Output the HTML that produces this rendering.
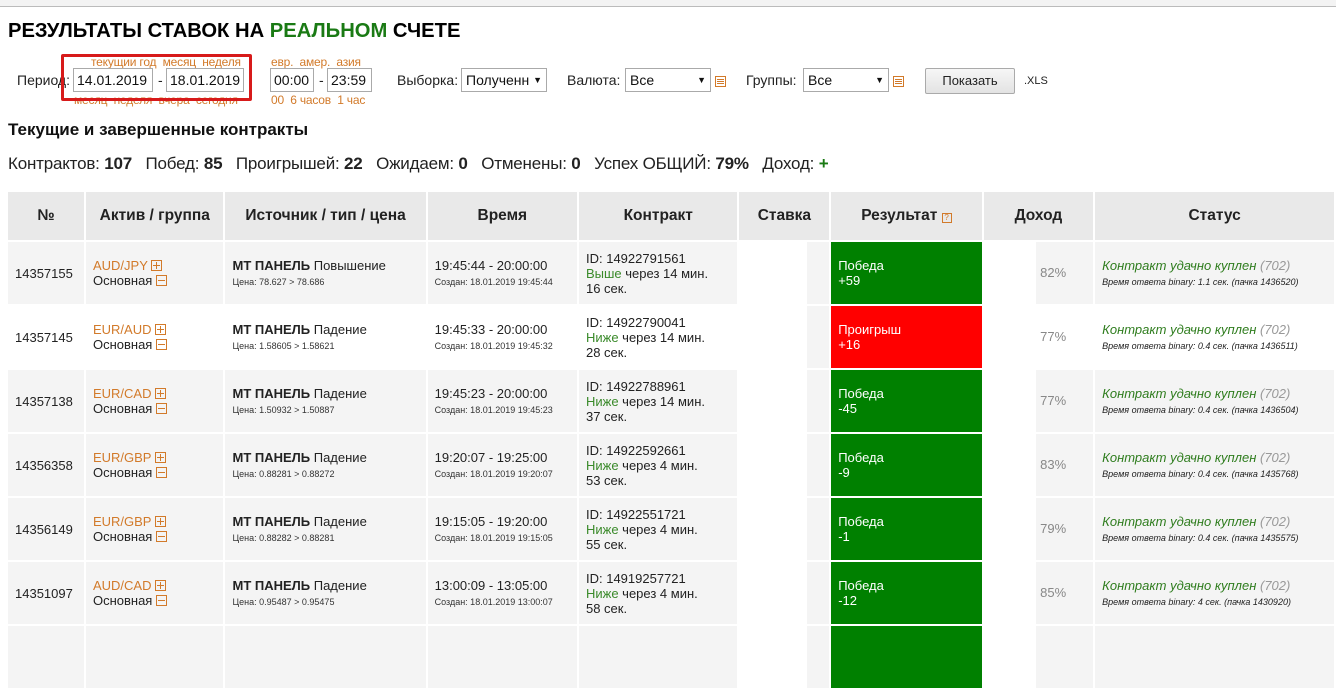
<!DOCTYPE html>
<html><head><meta charset="utf-8"><style>
*{box-sizing:border-box;margin:0;padding:0}
body{width:1336px;height:629px;overflow:hidden;background:#fff;font-family:"Liberation Sans",sans-serif;color:#222;position:relative}
.a{position:absolute;white-space:nowrap}
.topbar{position:absolute;left:0;top:0;width:1336px;height:7px;background:#f3f3f3;border-bottom:1px solid #bbb}
h1{position:absolute;left:8px;top:20px;font-size:20.2px;font-weight:bold;color:#000}
.or{color:#d27a2a;font-size:12px;letter-spacing:-0.2px}
.inp{position:absolute;height:24px;border:1px solid #aaa;background:#fff;font-size:14px;padding:3px 3px;color:#111}
.sel{position:absolute;height:24px;border:1px solid #aaa;background:#fff;font-size:14px;padding:3px 4px;color:#111}
.sel:after{content:"▼";position:absolute;right:4px;top:6px;font-size:9px}
.ic{display:inline-block;width:11px;height:11px;border:1px solid #d27a2a;position:relative;vertical-align:-1px}
.ic.m:before{content:"";position:absolute;left:1px;right:1px;top:4px;height:1px;background:#d27a2a}
.ic.e:before{content:"";position:absolute;left:1px;right:1px;top:2px;height:1px;background:#d27a2a;box-shadow:0 2px 0 #d27a2a,0 4px 0 #d27a2a}
.ic.p:before{content:"";position:absolute;left:1px;right:1px;top:4px;height:1px;background:#d27a2a}
.ic.p:after{content:"";position:absolute;top:1px;bottom:1px;left:4px;width:1px;background:#d27a2a}
.lbl{font-size:14px;color:#222}
table{position:absolute;left:6px;top:190px;border-collapse:separate;border-spacing:2px;table-layout:fixed}
th{background:#e9e9e9;height:48px;font-size:15.5px;font-weight:bold;color:#222}
td{height:62px;font-size:13px;color:#222;vertical-align:middle;padding:0 7px;background:#f4f4f4}
tr.w td{background:#fff}
.sm{font-size:9px;color:#333}
.g{color:#3a8a2a}
.res{color:#fff;font-size:13px;padding-left:7px}
.win{background:#008000!important}
.los{background:#ff0000!important}
td.st{padding:0;position:relative;background:#fff!important}
td.st div{position:absolute;right:0;top:0;bottom:0;width:22px;background:#f4f4f4}
td.dh{padding:0;position:relative;background:#fff!important}
td.dh div{position:absolute;right:0;top:0;bottom:0;width:57px;background:#f4f4f4;color:#888;font-size:13px;line-height:62px;padding-left:4px}
.stt{font-style:italic;color:#2f7d1e;font-size:13px}
.stt span{color:#999}
.stt .sm{color:#222;font-size:9px}
</style></head><body>
<div class="topbar"></div>
<h1>РЕЗУЛЬТАТЫ СТАВОК НА <span style="color:#1a7a14">РЕАЛЬНОМ</span> СЧЕТЕ</h1>

<div class="a or" style="left:91px;top:55px">текущии год&nbsp; месяц&nbsp; неделя</div>
<div class="a lbl" style="left:17px;top:72px">Период:</div>
<div class="inp" style="left:73px;top:68px;width:80px">14.01.2019</div>
<div class="a lbl" style="left:158px;top:72px">-</div>
<div class="inp" style="left:166px;top:68px;width:78px">18.01.2019</div>
<div class="a or" style="left:74px;top:93px">месяц&nbsp; неделя&nbsp; вчера&nbsp; сегодня</div>
<div class="a" style="left:61px;top:54px;width:191px;height:47px;border:3px solid #d71a1a;border-radius:2px"></div>

<div class="a or" style="left:271px;top:55px">евр.&nbsp; амер.&nbsp; азия</div>
<div class="inp" style="left:270px;top:68px;width:44px">00:00</div>
<div class="a lbl" style="left:319px;top:72px">-</div>
<div class="inp" style="left:327px;top:68px;width:45px">23:59</div>
<div class="a or" style="left:271px;top:93px">00&nbsp; 6 часов&nbsp; 1 час</div>

<div class="a lbl" style="left:397px;top:72px">Выборка:</div>
<div class="sel" style="left:461px;top:68px;width:86px">Полученн</div>
<div class="a lbl" style="left:567px;top:72px">Валюта:</div>
<div class="sel" style="left:625px;top:68px;width:86px">Все</div>
<div class="a" style="left:715px;top:73px"><span class="ic e"></span></div>
<div class="a lbl" style="left:746px;top:72px">Группы:</div>
<div class="sel" style="left:803px;top:68px;width:86px">Все</div>
<div class="a" style="left:893px;top:73px"><span class="ic e"></span></div>
<div class="a" style="left:925px;top:68px;width:90px;height:26px;border:1px solid #aaa;border-radius:2px;background:linear-gradient(#f6f6f6,#e3e3e3);font-size:13px;text-align:center;line-height:24px">Показать</div>
<div class="a" style="left:1024px;top:75px;font-size:11px">.XLS</div>

<div class="a" style="left:8px;top:120px;font-size:17px;font-weight:bold;color:#111">Текущие и завершенные контракты</div>
<div class="a" style="left:8px;top:154px;font-size:17px;color:#222;letter-spacing:-0.2px">Контрактов: <b>107</b>&nbsp;&nbsp; Побед: <b>85</b>&nbsp;&nbsp; Проигрышей: <b>22</b>&nbsp;&nbsp; Ожидаем: <b>0</b>&nbsp;&nbsp; Отменены: <b>0</b>&nbsp;&nbsp; Успех ОБЩИЙ: <b>79%</b>&nbsp;&nbsp; Доход: <b style="color:#1a7a14">+</b></div>

<table>
<colgroup><col style="width:76px"><col style="width:138px"><col style="width:201px"><col style="width:150px"><col style="width:159px"><col style="width:90px"><col style="width:151px"><col style="width:110px"><col style="width:240px"></colgroup>
<tr><th>№</th><th>Актив / группа</th><th>Источник / тип / цена</th><th>Время</th><th>Контракт</th><th>Ставка</th><th>Результат <span class="ic" style="width:10px;height:10px;font-size:8px;line-height:8px;color:#d27a2a;font-weight:normal;vertical-align:0">?</span></th><th>Доход</th><th>Статус</th></tr>

<tr><td>14357155</td><td><span style="color:#d27a2a">AUD/JPY</span> <span class="ic p"></span><br>Основная <span class="ic m"></span></td><td><b>МТ ПАНЕЛЬ</b> Повышение<br><span class="sm">Цена: 78.627 &gt; 78.686</span></td><td>19:45:44 - 20:00:00<br><span class="sm">Создан: 18.01.2019 19:45:44</span></td><td>ID: 14922791561<br><span class="g">Выше</span> через 14 мин.<br>16 сек.</td><td class="st"><div></div></td><td class="res win">Победа<br>+59</td><td class="dh"><div>82%</div></td><td class="stt">Контракт удачно куплен <span>(702)</span><br><span class="sm">Время ответа binary: 1.1 сек. (пачка 1436520)</span></td></tr>

<tr class="w"><td>14357145</td><td><span style="color:#d27a2a">EUR/AUD</span> <span class="ic p"></span><br>Основная <span class="ic m"></span></td><td><b>МТ ПАНЕЛЬ</b> Падение<br><span class="sm">Цена: 1.58605 &gt; 1.58621</span></td><td>19:45:33 - 20:00:00<br><span class="sm">Создан: 18.01.2019 19:45:32</span></td><td>ID: 14922790041<br><span class="g">Ниже</span> через 14 мин.<br>28 сек.</td><td class="st"><div></div></td><td class="res los">Проигрыш<br>+16</td><td class="dh"><div style="background:#fff">77%</div></td><td class="stt">Контракт удачно куплен <span>(702)</span><br><span class="sm">Время ответа binary: 0.4 сек. (пачка 1436511)</span></td></tr>

<tr><td>14357138</td><td><span style="color:#d27a2a">EUR/CAD</span> <span class="ic p"></span><br>Основная <span class="ic m"></span></td><td><b>МТ ПАНЕЛЬ</b> Падение<br><span class="sm">Цена: 1.50932 &gt; 1.50887</span></td><td>19:45:23 - 20:00:00<br><span class="sm">Создан: 18.01.2019 19:45:23</span></td><td>ID: 14922788961<br><span class="g">Ниже</span> через 14 мин.<br>37 сек.</td><td class="st"><div></div></td><td class="res win">Победа<br>-45</td><td class="dh"><div>77%</div></td><td class="stt">Контракт удачно куплен <span>(702)</span><br><span class="sm">Время ответа binary: 0.4 сек. (пачка 1436504)</span></td></tr>

<tr><td>14356358</td><td><span style="color:#d27a2a">EUR/GBP</span> <span class="ic p"></span><br>Основная <span class="ic m"></span></td><td><b>МТ ПАНЕЛЬ</b> Падение<br><span class="sm">Цена: 0.88281 &gt; 0.88272</span></td><td>19:20:07 - 19:25:00<br><span class="sm">Создан: 18.01.2019 19:20:07</span></td><td>ID: 14922592661<br><span class="g">Ниже</span> через 4 мин.<br>53 сек.</td><td class="st"><div></div></td><td class="res win">Победа<br>-9</td><td class="dh"><div>83%</div></td><td class="stt">Контракт удачно куплен <span>(702)</span><br><span class="sm">Время ответа binary: 0.4 сек. (пачка 1435768)</span></td></tr>

<tr><td>14356149</td><td><span style="color:#d27a2a">EUR/GBP</span> <span class="ic p"></span><br>Основная <span class="ic m"></span></td><td><b>МТ ПАНЕЛЬ</b> Падение<br><span class="sm">Цена: 0.88282 &gt; 0.88281</span></td><td>19:15:05 - 19:20:00<br><span class="sm">Создан: 18.01.2019 19:15:05</span></td><td>ID: 14922551721<br><span class="g">Ниже</span> через 4 мин.<br>55 сек.</td><td class="st"><div></div></td><td class="res win">Победа<br>-1</td><td class="dh"><div>79%</div></td><td class="stt">Контракт удачно куплен <span>(702)</span><br><span class="sm">Время ответа binary: 0.4 сек. (пачка 1435575)</span></td></tr>

<tr><td>14351097</td><td><span style="color:#d27a2a">AUD/CAD</span> <span class="ic p"></span><br>Основная <span class="ic m"></span></td><td><b>МТ ПАНЕЛЬ</b> Падение<br><span class="sm">Цена: 0.95487 &gt; 0.95475</span></td><td>13:00:09 - 13:05:00<br><span class="sm">Создан: 18.01.2019 13:00:07</span></td><td>ID: 14919257721<br><span class="g">Ниже</span> через 4 мин.<br>58 сек.</td><td class="st"><div></div></td><td class="res win">Победа<br>-12</td><td class="dh"><div>85%</div></td><td class="stt">Контракт удачно куплен <span>(702)</span><br><span class="sm">Время ответа binary: 4 сек. (пачка 1430920)</span></td></tr>

<tr><td></td><td></td><td></td><td></td><td></td><td class="st"><div></div></td><td class="res win"></td><td class="dh"><div></div></td><td></td></tr>
</table>
</body></html>
